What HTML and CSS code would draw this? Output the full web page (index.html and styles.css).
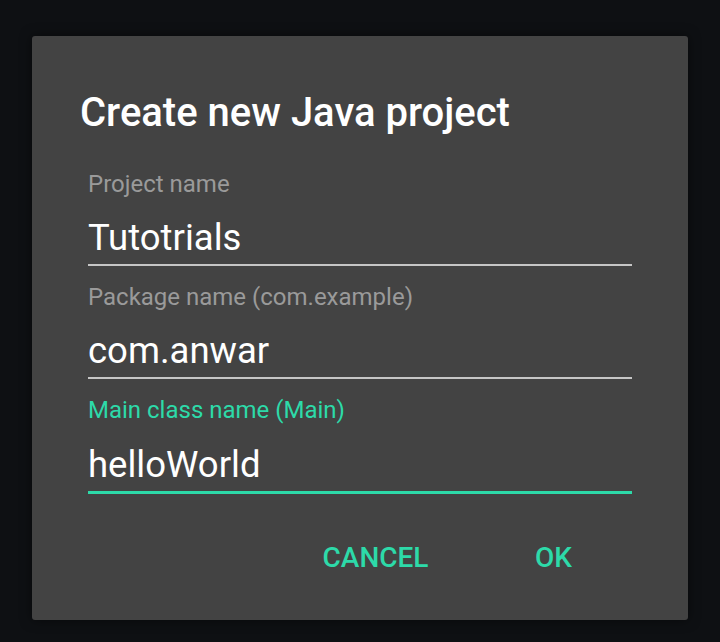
FILE: index.html
```html
<!DOCTYPE html>
<html>
<head>
<meta charset="utf-8">
<link rel="stylesheet" href="styles.css">
</head>
<body>
<div class="screen">
  <div class="dialog">
    <h1 class="title">Create new Java project</h1>
    <div class="fields">
      <div class="field">
        <div class="label">Project name</div>
        <div class="input">Tutotrials</div>
      </div>
      <div class="field">
        <div class="label">Package name (com.example)</div>
        <div class="input">com.anwar</div>
      </div>
      <div class="field focused">
        <div class="label">Main class name (Main)</div>
        <div class="input">helloWorld</div>
      </div>
    </div>
    <div class="actions">
      <button class="btn">CANCEL</button>
      <button class="btn">OK</button>
    </div>
  </div>
</div>
</body>
</html>
```
FILE: styles.css
```css
html, body {
  margin: 0;
  padding: 0;
  background: #0e1013;
}
body {
  width: 720px;
  height: 642px;
  overflow: hidden;
  font-family: Roboto, "Noto Sans", sans-serif;
}
.screen {
  padding: 36px 32px 0 32px;
}
.dialog {
  background: #434343;
  border-radius: 3px;
  height: 584px;
  box-sizing: border-box;
  padding: 54px 0 0 0;
  display: flex;
  flex-direction: column;
  box-shadow: 0 0 12px rgba(0,0,0,0.5);
}
.title {
  margin: 0 0 0 48px;
  font-size: 40px;
  line-height: 46px;
  font-weight: 500;
  color: #ffffff;
}
.fields {
  margin: 33.5px 56px 0 56px;
  display: flex;
  flex-direction: column;
  gap: 16.5px;
}
.field {
  display: flex;
  flex-direction: column;
  border-bottom: 2px solid #c6c6c6;
  padding-bottom: 4px;
}
.label {
  font-size: 24px;
  line-height: 28px;
  color: #9a9a9a;
  margin-bottom: 18.7px;
}
.input {
  font-size: 36.5px;
  line-height: 44px;
  color: #ffffff;
}
.field.focused {
  border-bottom: 3px solid #2ddaa9;
}
.field.focused .label {
  color: #2ddaa9;
}
.actions {
  margin-top: 47px;
  display: flex;
  justify-content: flex-end;
  gap: 37px;
  padding-right: 64px;
}
.btn {
  background: none;
  border: none;
  padding: 0;
  width: 141px;
  font-family: Roboto, "Noto Sans", sans-serif;
  font-size: 28px;
  line-height: 34px;
  font-weight: 500;
  color: #2ddaa9;
  text-align: center;
}
```
